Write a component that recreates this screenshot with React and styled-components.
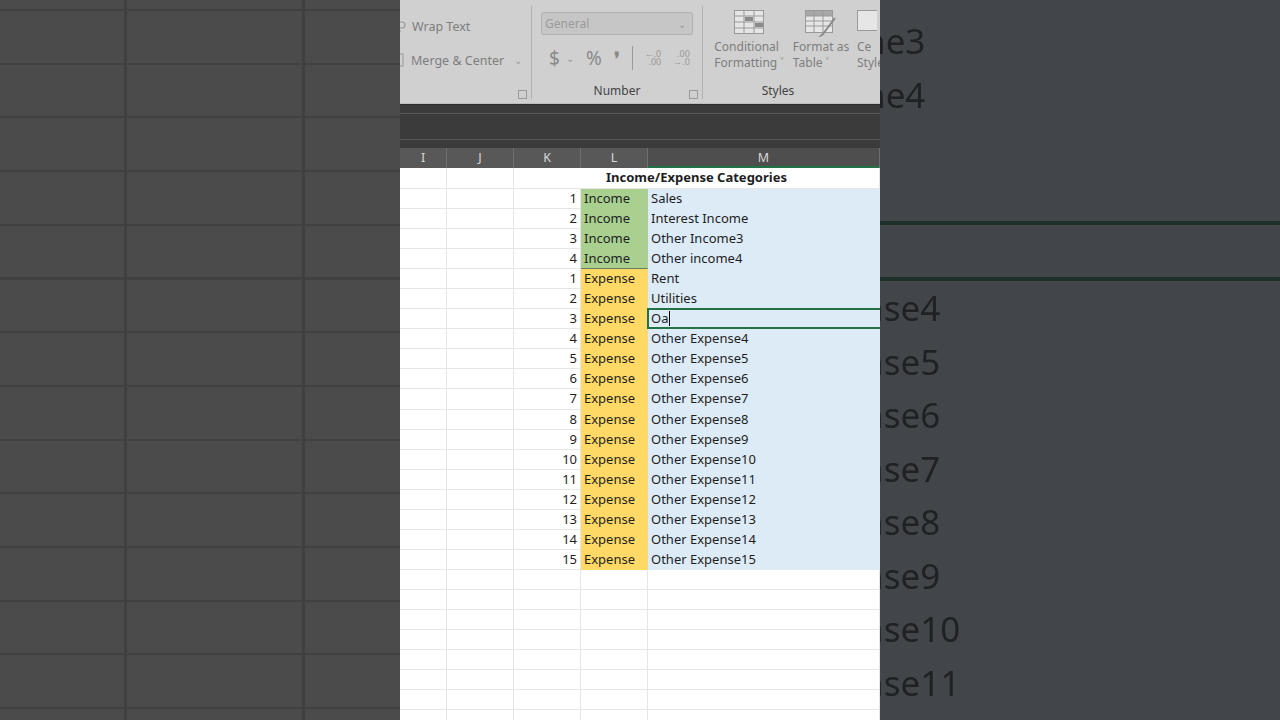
import React from "react";
import styled, { createGlobalStyle } from "styled-components";

const Global = createGlobalStyle`
  html, body { margin: 0; padding: 0; background: #4b4b4b; }
  body { font-family: "Noto Sans", "Open Sans", sans-serif; }
`;

const Page = styled.div`
  display: grid;
  grid-template-columns: 400px 480px 400px;
  width: 1280px;
  height: 720px;
  overflow: hidden;
`;

const LeftBlur = styled.div`
  background-color: #4b4b4b;
  background-image:
    linear-gradient(90deg, transparent 124px, #404040 124px, #404040 127px, transparent 127px, transparent 302px, #404040 302px, #404040 305px, transparent 305px),
    repeating-linear-gradient(180deg, transparent 0, transparent 9px, #414141 9px, #414141 11px, transparent 11px, transparent 53.7px);
`;

const RightBlur = styled.div`
  background: #42464a;
  overflow: hidden;
  display: flex;
  flex-direction: column;
  padding-top: 14px;
`;

const BigRow = styled.div`
  height: 53.5px;
  flex-shrink: 0;
  font-size: 35px;
  line-height: 53.5px;
  color: #1f2124;
  font-family: "Noto Sans", sans-serif;
  white-space: nowrap;
  margin-left: ${(p) => p.$shift}px;
  filter: blur(0.6px);
`;

const BigGap = styled.div`
  height: 160px;
  flex-shrink: 0;
  box-sizing: border-box;
  padding-top: 100px;
  display: flex;
  flex-direction: column;
  gap: 52px;
`;

const GreenLine = styled.div`
  height: 4px;
  background: #1d3129;
`;

const Center = styled.div`
  display: flex;
  flex-direction: column;
  background: #fff;
  overflow: hidden;
`;

const Ribbon = styled.div`
  height: 104px;
  flex-shrink: 0;
  background: #d0d0d0;
  display: flex;
  color: #7e7e7e;
  font-size: 12.5px;
  box-sizing: border-box;
  border-bottom: 1px solid #bdbdbd;
  overflow: hidden;
`;

const Group = styled.div`
  width: ${(p) => p.$w}px;
  display: flex;
  flex-direction: column;
  position: relative;
  flex-shrink: 0;
`;

const GroupBody = styled.div`
  flex: 1;
  display: flex;
  flex-direction: column;
  padding: ${(p) => p.$pad || "0"};
  gap: ${(p) => p.$gap || 0}px;
`;

const GroupLabel = styled.div`
  height: 20px;
  line-height: 16px;
  text-align: center;
  color: #444;
  font-size: 12px;
`;

const Launcher = styled.span`
  position: absolute;
  right: 4px;
  bottom: 4px;
  width: 7px;
  height: 7px;
  border: 1px solid #9a9a9a;
`;

const Sep = styled.div`
  width: 1px;
  margin: 6px 0 4px;
  background: #b2b2b2;
  flex-shrink: 0;
`;

const RibbonLine = styled.div`
  display: flex;
  align-items: center;
  gap: 6px;
  height: 20px;
  white-space: nowrap;
  margin-left: ${(p) => p.$ml || 0}px;
`;

const Dropdown = styled.div`
  width: 152px;
  height: 23px;
  box-sizing: border-box;
  border: 1px solid #b0b0b0;
  border-radius: 3px;
  background: #c6c6c6;
  display: flex;
  align-items: center;
  justify-content: space-between;
  padding: 0 6px 0 3px;
  color: #9a9a9a;
  font-size: 12px;
`;

const NumRow = styled.div`
  display: flex;
  align-items: center;
  gap: 12px;
  font-size: 19px;
  color: #8a8a8a;
  padding-left: 8px;
`;

const SmallChev = styled.span`
  font-size: 10px;
  color: #999;
`;

const DecBox = styled.span`
  font-size: 9px;
  line-height: 8px;
  display: inline-flex;
  flex-direction: column;
  align-items: flex-end;
  color: #999;
`;

const VBar = styled.span`
  width: 1px;
  height: 24px;
  background: #9a9a9a;
`;

const StyleBtns = styled.div`
  display: flex;
  gap: 6px;
  padding: 10px 0 0 10px;
`;

const StyleBtn = styled.div`
  display: flex;
  flex-direction: column;
  align-items: center;
  line-height: 16px;
  font-size: 12px;
  white-space: nowrap;
  gap: 5px;
  width: ${(p) => p.$w}px;
  flex-shrink: 0;
`;

const DarkBand = styled.div`
  height: 44px;
  flex-shrink: 0;
  background: #3b3b3b;
  border-top: 1px solid #2e2e2e;
  box-sizing: border-box;
  display: flex;
  flex-direction: column;
  justify-content: space-between;
  padding: 8px 0 8px;
`;

const BandLine = styled.div`
  height: 1px;
  background: #585858;
`;

const HeaderRow = styled.div`
  display: grid;
  flex-shrink: 0;
  grid-template-columns: 47px 67px 67px 67px 1fr;
  height: 20px;
  background: #585858;
`;

const HeadCell = styled.div`
  color: #d8d8d8;
  font-size: 12.5px;
  text-align: center;
  line-height: 20px;
  border-right: 1px solid #6e6e6e;
  background: ${(p) => (p.$sel ? "#4e4e4e" : "#585858")};
  box-shadow: ${(p) => (p.$sel ? "inset 0 -2px 0 #217346" : "none")};
`;

const Sheet = styled.div`
  display: grid;
  flex-shrink: 0;
  grid-template-columns: 47px 67px 67px 67px 232px;
  grid-template-rows: 21px;
  grid-auto-rows: 20.05px;
`;

const Cell = styled.div`
  box-sizing: border-box;
  border-right: 1px solid ${(p) => p.$line || "#e6e6e6"};
  border-bottom: 1px solid ${(p) => p.$bline || p.$line || "#e6e6e6"};
  background: ${(p) => p.$bg || "#fff"};
  color: #1e1e1e;
  font-size: 13px;
  line-height: 19px;
  padding: 0 3px;
  text-align: ${(p) => p.$align || "left"};
  white-space: nowrap;
  overflow: visible;
  position: relative;
  grid-column: ${(p) => p.$span || "auto"};
  font-weight: ${(p) => (p.$bold ? 700 : 400)};
`;

const Active = styled.div`
  position: absolute;
  inset: -1px -4px -1px -1px;
  border: 2px solid #217346;
  pointer-events: none;
`;

const Caret = styled.span`
  display: inline-block;
  width: 1px;
  height: 15px;
  background: #000;
  vertical-align: -3px;
  margin-left: 1px;
`;

const GREEN = "#a9d08e";
const YELLOW = "#ffd966";
const BLUE = "#ddebf7";

const rows = [
  ...[["1", "Sales"], ["2", "Interest Income"], ["3", "Other Income3"], ["4", "Other income4"]].map(
    ([n, t]) => ({ n, cat: "Income", t })
  ),
  ...Array.from({ length: 15 }, (_, i) => ({
    n: String(i + 1),
    cat: "Expense",
    t: i === 0 ? "Rent" : i === 1 ? "Utilities" : i === 2 ? null : `Other Expense${i + 1}`,
  })),
];

const WrapIcon = () => (
  <svg width="10" height="14" viewBox="0 0 10 14" style={{ marginLeft: -4 }}>
    <path d="M0 3h6a3 3 0 0 1 0 6H3" stroke="#999" fill="none" strokeWidth="1.2" />
    <path d="M0 12h5" stroke="#999" strokeWidth="1.2" />
  </svg>
);

const CondIcon = () => (
  <svg width="30" height="24" viewBox="0 0 30 24">
    <rect x="0.5" y="0.5" width="29" height="23" fill="#e6e6e6" stroke="#999" />
    <path d="M0 6h30M0 12h30M0 18h30M10 0v24M20 0v24" stroke="#999" />
    <rect x="11" y="7" width="8" height="4" fill="#8a8a8a" />
    <rect x="21" y="13" width="8" height="4" fill="#8a8a8a" />
  </svg>
);

const TableIcon = () => (
  <svg width="32" height="28" viewBox="0 0 32 28">
    <rect x="0.5" y="0.5" width="27" height="22" fill="#e6e6e6" stroke="#999" />
    <rect x="1" y="1" width="26" height="5" fill="#a8a8a8" />
    <path d="M0 6h28M0 11h28M0 16h28M9 0v23M18 0v23" stroke="#999" />
    <path d="M30 8L18 24" stroke="#888" strokeWidth="2" />
    <path d="M18 23c-2 1-3 3-5 4 3 0 5-1 6-3z" fill="#888" />
  </svg>
);

const CellIcon = () => (
  <svg width="20" height="24" viewBox="0 0 20 24">
    <rect x="0.5" y="0.5" width="26" height="20" fill="#e6e6e6" stroke="#999" />
  </svg>
);

const bigLines = ["ne3", "ne4"];
const bigLines2 = ["nse4", "nse5", "nse6", "nse7", "nse8", "nse9", "nse10", "nse11", "nse12"];

export default function App() {
  const empties = Array.from({ length: 8 });
  return (
    <>
      <Global />
      <Page>
        <LeftBlur />
        <Center>
          <Ribbon>
            <Group $w={131}>
              <GroupBody $pad="16px 0 0 0" $gap={14}>
                <RibbonLine>
                  <WrapIcon />
                  <span>Wrap Text</span>
                </RibbonLine>
                <RibbonLine $ml={-3}>
                  <svg width="8" height="14" viewBox="0 0 8 14">
                    <rect x="-2" y="1" width="8" height="12" fill="none" stroke="#999" />
                  </svg>
                  <span>Merge &amp; Center</span>
                  <SmallChev style={{ marginLeft: 4 }}>⌄</SmallChev>
                </RibbonLine>
              </GroupBody>
              <GroupLabel>&nbsp;</GroupLabel>
              <Launcher />
            </Group>
            <Sep />
            <Group $w={170}>
              <GroupBody $pad="12px 0 0 9px" $gap={10}>
                <Dropdown>
                  <span>General</span>
                  <SmallChev>⌄</SmallChev>
                </Dropdown>
                <NumRow>
                  <span>$</span>
                  <SmallChev style={{ marginLeft: -6 }}>⌄</SmallChev>
                  <span>%</span>
                  <span style={{ fontWeight: 700, fontSize: 18 }}>❜</span>
                  <VBar />
                  <DecBox>
                    <span>←.0</span>
                    <span>.00</span>
                  </DecBox>
                  <DecBox>
                    <span>.00</span>
                    <span>→.0</span>
                  </DecBox>
                </NumRow>
              </GroupBody>
              <GroupLabel>Number</GroupLabel>
              <Launcher />
            </Group>
            <Sep />
            <Group $w={178}>
              <GroupBody>
                <StyleBtns>
                  <StyleBtn $w={72}>
                    <CondIcon />
                    <span>Conditional<br />Formatting ˅</span>
                  </StyleBtn>
                  <StyleBtn $w={60}>
                    <TableIcon />
                    <span style={{ marginTop: -4 }}>Format as<br />Table ˅</span>
                  </StyleBtn>
                  <StyleBtn $w={28} style={{ alignItems: "flex-start" }}>
                    <CellIcon />
                    <span>Ce<br />Style</span>
                  </StyleBtn>
                </StyleBtns>
              </GroupBody>
              <GroupLabel style={{ paddingRight: 28 }}>Styles</GroupLabel>
            </Group>
          </Ribbon>
          <DarkBand>
            <BandLine />
            <BandLine />
          </DarkBand>
          <HeaderRow>
            <HeadCell>I</HeadCell>
            <HeadCell>J</HeadCell>
            <HeadCell>K</HeadCell>
            <HeadCell>L</HeadCell>
            <HeadCell $sel>M</HeadCell>
          </HeaderRow>
          <Sheet>
            <Cell />
            <Cell />
            <Cell $span="span 3" $align="center" $bold>
              Income/Expense Categories
            </Cell>
            {rows.map((r, i) => {
              const isInc = r.cat === "Income";
              const catBg = isInc ? GREEN : YELLOW;
              return (
                <React.Fragment key={i}>
                  <Cell />
                  <Cell />
                  <Cell $align="right">{r.n}</Cell>
                  <Cell $bg={catBg} $line={catBg} $bline={i === 3 ? "#6b7a5a" : catBg}>
                    {r.cat}
                  </Cell>
                  <Cell $bg={BLUE} $line={BLUE}>
                    {r.t === null ? (
                      <>
                        Oa
                        <Caret />
                        <Active />
                      </>
                    ) : (
                      r.t
                    )}
                  </Cell>
                </React.Fragment>
              );
            })}
            {empties.map((_, i) => (
              <React.Fragment key={"e" + i}>
                <Cell />
                <Cell />
                <Cell />
                <Cell />
                <Cell />
              </React.Fragment>
            ))}
          </Sheet>
        </Center>
        <RightBlur>
          {bigLines.map((t) => (
            <BigRow key={t} $shift={-16}>
              {t}
            </BigRow>
          ))}
          <BigGap>
            <GreenLine />
            <GreenLine />
          </BigGap>
          {bigLines2.map((t) => (
            <BigRow key={t} $shift={-18}>
              {t}
            </BigRow>
          ))}
        </RightBlur>
      </Page>
    </>
  );
}
